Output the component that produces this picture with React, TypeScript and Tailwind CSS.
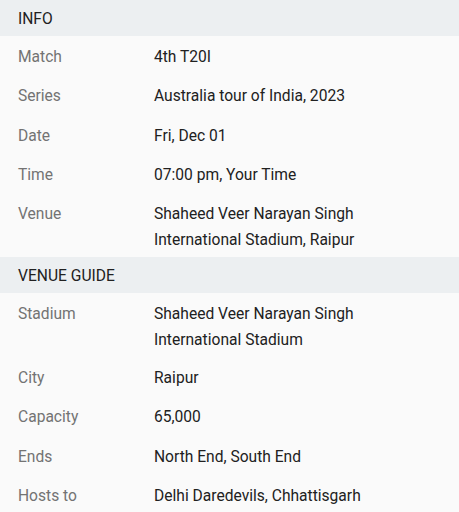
import React from 'react';

type Row = { label: string; value: string[] };

const info: Row[] = [
  { label: 'Match', value: ['4th T20I'] },
  { label: 'Series', value: ['Australia tour of India, 2023'] },
  { label: 'Date', value: ['Fri, Dec 01'] },
  { label: 'Time', value: ['07:00 pm, Your Time'] },
  { label: 'Venue', value: ['Shaheed Veer Narayan Singh', 'International Stadium, Raipur'] },
];

const venueGuide: Row[] = [
  { label: 'Stadium', value: ['Shaheed Veer Narayan Singh', 'International Stadium'] },
  { label: 'City', value: ['Raipur'] },
  { label: 'Capacity', value: ['65,000'] },
  { label: 'Ends', value: ['North End, South End'] },
  { label: 'Hosts to', value: ['Delhi Daredevils, Chhattisgarh'] },
];

function Section({ title, rows }: { title: string; rows: Row[] }) {
  return (
    <section>
      <div className="h-[36px] bg-[#eceff1] px-[18px] pt-[1px] leading-[36px] text-[#212121]">{title}</div>
      {rows.map((r) => (
        <div key={r.label} className="grid min-h-[39.3px] grid-cols-[154px_1fr] pt-[8px] pb-[4px] leading-[26px]">
          <div className="pl-[18px] text-[#737373]">{r.label}</div>
          <div className="text-[#212121]">
            {r.value.map((v) => (
              <div key={v}>{v}</div>
            ))}
          </div>
        </div>
      ))}
    </section>
  );
}

export default function App() {
  return (
    <div className="min-h-screen w-[459px] bg-[#fafafa] text-[15.6px]" style={{ fontFamily: 'Roboto, sans-serif' }}>
      <Section title="INFO" rows={info} />
      <Section title="VENUE GUIDE" rows={venueGuide} />
    </div>
  );
}
